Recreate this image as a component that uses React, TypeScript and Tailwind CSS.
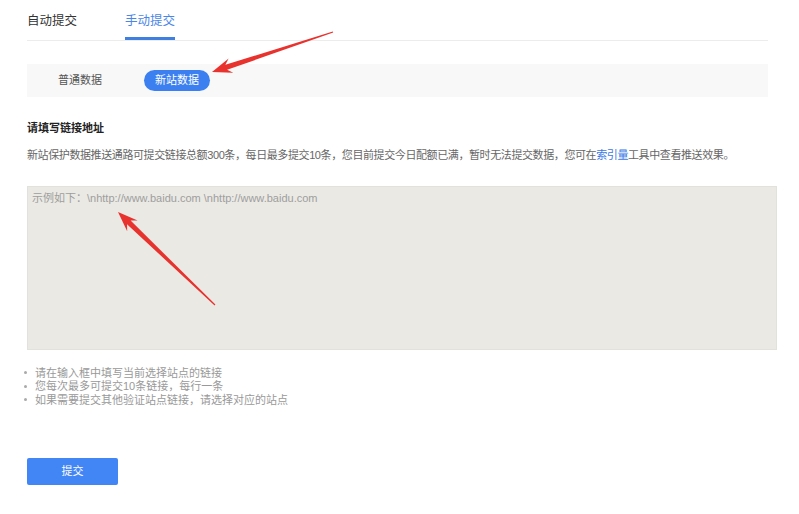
import React from "react";

// 红色标注箭头：尾部细，头部带凹口
function arrowPoints(tx: number, ty: number, px: number, py: number) {
  const dx = px - tx, dy = py - ty;
  const len = Math.hypot(dx, dy);
  const ux = dx / len, uy = dy / len;
  const nx = uy, ny = -ux;
  const L = 20, W = 7.5;
  const bx = px - ux * L, by = py - uy * L;
  const sx = px - ux * (L - 5), sy = py - uy * (L - 5);
  const p = (x: number, y: number) => `${x.toFixed(1)},${y.toFixed(1)}`;
  return [
    p(tx + nx * 0.6, ty + ny * 0.6),
    p(sx + nx * 2.6, sy + ny * 2.6),
    p(bx + nx * W, by + ny * W),
    p(px, py),
    p(bx - nx * W, by - ny * W),
    p(sx - nx * 2.6, sy - ny * 2.6),
    p(tx - nx * 0.6, ty - ny * 0.6),
  ].join(" ");
}

const tips = [
  "请在输入框中填写当前选择站点的链接",
  "您每次最多可提交10条链接，每行一条",
  "如果需要提交其他验证站点链接，请选择对应的站点",
];

export default function App() {
  return (
    <div className="relative w-[799px] h-[514px] bg-white overflow-hidden font-['Liberation_Sans','Noto_Sans_CJK_SC',sans-serif]">
      <div className="pl-[27px]">
        {/* tabs */}
        <div className="flex h-[41px] w-[741px] border-b border-[#ececec] gap-[48px]">
          <div className="flex items-center pt-[5px] border-b-[3px] border-transparent text-[12.5px] text-[#333]">自动提交</div>
          <div className="flex items-center pt-[5px] border-b-[3px] border-[#3f7fe0] text-[12.5px] text-[#4a86e8]">手动提交</div>
        </div>

        {/* sub tabs */}
        <div className="mt-[23px] flex items-center h-[33px] w-[741px] bg-[#f8f8f8] pl-[31px]">
          <span className="text-[11px] text-[#555]">普通数据</span>
          <span className="ml-[42px] flex items-center justify-center w-[66px] h-[21px] rounded-full bg-[#3b7ff0] text-white text-[11px]">新站数据</span>
        </div>

        <div className="mt-[23px] text-[11px] leading-[16px] font-bold text-[#222]">请填写链接地址</div>
        <div className="mt-[11px] text-[11px] leading-[16px] tracking-[-0.4px] text-[#666] whitespace-nowrap">
          新站保护数据推送通路可提交链接总额300条，每日最多提交10条，您目前提交今日配额已满，暂时无法提交数据，您可在<span className="text-[#3b78e7]">索引量</span>工具中查看推送效果。
        </div>

        <textarea
          className="mt-[23px] block w-[750px] h-[164px] resize-none bg-[#eae9e4] border border-[#e2e1db] pl-[4px] pt-[3px] text-[11px] leading-[16px] text-[#333] placeholder:text-[#9e9e9e] outline-none"
          placeholder="示例如下：\nhttp://www.baidu.com \nhttp://www.baidu.com"
        />

        <ul className="mt-[16px] flex flex-col">
          {tips.map((t) => (
            <li key={t} className="flex items-center h-[13.5px] -ml-[3px] gap-[8px] text-[11px] text-[#999]">
              <span className="w-[3px] h-[3px] rounded-full bg-[#aaa]" />
              {t}
            </li>
          ))}
        </ul>

        <button className="mt-[51px] w-[91px] h-[27px] rounded-[2px] bg-[#4285f4] text-white text-[11px]">提交</button>
      </div>

      <svg className="absolute inset-0 pointer-events-none" width="799" height="514">
        <polygon points={arrowPoints(333, 32, 212, 72)} fill="#e8322e" />
        <polygon points={arrowPoints(215, 305, 118, 212)} fill="#e8322e" />
      </svg>
    </div>
  );
}
